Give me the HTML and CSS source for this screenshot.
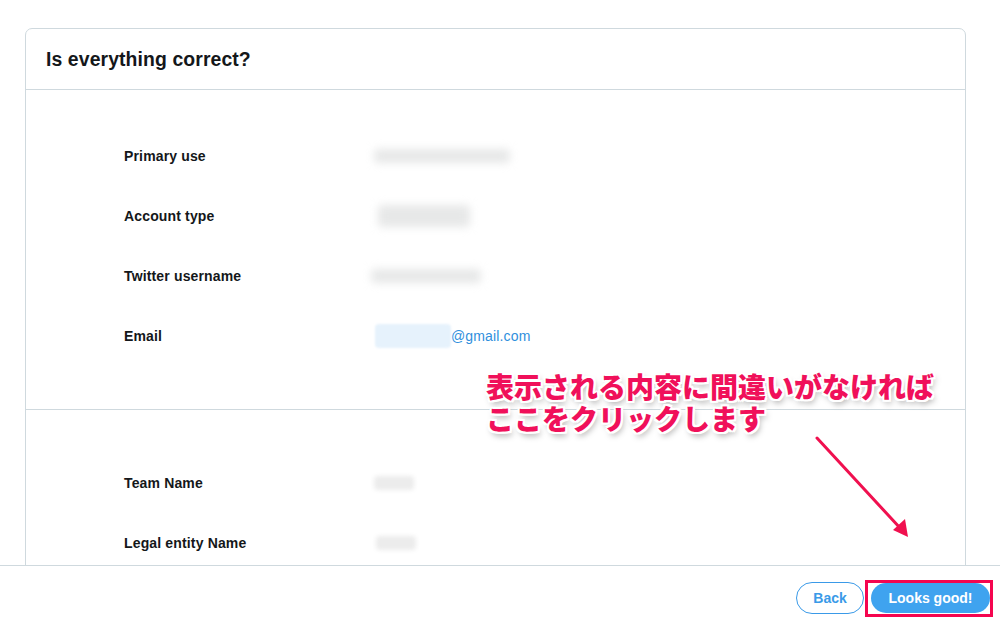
FILE: index.html
```html
<!DOCTYPE html>
<html lang="en">
<head>
<meta charset="utf-8">
<link rel="stylesheet" href="styles.css">
</head>
<body>
<div class="page">
  <main class="viewport">
    <section class="card">
      <header class="card-head"><h1>Is everything correct?</h1></header>
      <div class="section s1">
        <div class="row"><span class="label">Primary use</span><span class="blur b1"></span></div>
        <div class="row"><span class="label">Account type</span><span class="blur b2"></span></div>
        <div class="row"><span class="label">Twitter username</span><span class="blur b3"></span></div>
        <div class="row"><span class="label">Email</span><span class="email"><span class="blur b4"></span>@gmail.com</span></div>
      </div>
      <div class="section s2">
        <div class="row"><span class="label">Team Name</span><span class="blur b5"></span></div>
        <div class="row"><span class="label">Legal entity Name</span><span class="blur b6"></span></div>
        <div class="row"><span class="label"></span></div>
      </div>
    </section>
    <div class="note">
      <div class="note-line">表示される内容に間違いがなければ</div>
      <div class="note-line">ここをクリックします</div>
    </div>
    <svg class="arrow" width="110" height="110" viewBox="0 0 110 110">
      <line x1="4" y1="3" x2="88" y2="94" stroke="#f0104f" stroke-width="3" stroke-linecap="round"/>
      <polygon points="95,102 80,95 92,84" fill="#f0104f"/>
    </svg>
  </main>
  <footer class="foot">
    <button class="btn back">Back</button>
    <span class="hl"><button class="btn ok">Looks good!</button></span>
  </footer>
</div>
</body>
</html>
```
FILE: styles.css
```css
html, body { margin: 0; padding: 0; background: #fff; }
body { font-family: "Liberation Sans", Arial, sans-serif; color: #14171a; }
.page { width: 1000px; height: 629px; display: flex; flex-direction: column; overflow: hidden; }
.viewport { position: relative; height: 565px; overflow: hidden; padding: 28px 34px 0 25px; box-sizing: border-box; }
.card { border: 1px solid #cfd9de; border-radius: 7px; height: 700px; box-sizing: border-box; }
.card-head { height: 61px; border-bottom: 1px solid #cfd9de; display: flex; align-items: center; padding-left: 20px; box-sizing: border-box; }
.card-head h1 { margin: 0; font-size: 19.4px; font-weight: 700; letter-spacing: 0.1px; }
.section { padding-left: 98px; }
.s1 { padding-top: 36px; padding-bottom: 43px; border-bottom: 1px solid #cfd9de; }
.s2 { padding-top: 43px; }
.row { height: 60px; display: grid; grid-template-columns: 248px 1fr; align-items: center; }
.label { font-size: 14px; font-weight: 700; letter-spacing: 0.15px; }
.blur { display: block; background: #e7e8e8; filter: blur(4px); border-radius: 4px; }
.b1 { width: 136px; height: 14px; margin-left: 2px; }
.b2 { width: 92px; height: 22px; margin-left: 6px; }
.b3 { width: 110px; height: 14px; margin-left: -1px; }
.b4 { display: inline-block; width: 76px; height: 24px; background: #e6f2fc; vertical-align: middle; margin-left: 3px; filter: blur(1px); }
.b5 { width: 40px; height: 14px; margin-left: 2px; background: #ececec; filter: blur(2px); }
.b6 { width: 40px; height: 14px; margin-left: 4px; background: #ececec; filter: blur(2px); }
.email { font-size: 14px; color: #2f8fdd; display: flex; align-items: center; letter-spacing: 0.15px; }
.note { position: absolute; left: 486px; top: 370px; font-family: "Noto Sans CJK JP", sans-serif; font-weight: 900; font-size: 28px; color: #f0105a;
  text-shadow: -2px -2px 0 #fff, 2px -2px 0 #fff, -2px 2px 0 #fff, 2px 2px 0 #fff, 0 -2px 0 #fff, 0 2px 0 #fff, -2px 0 0 #fff, 2px 0 0 #fff, 2px 4px 6px rgba(0,0,0,0.35); }
.note-line { line-height: 32px; height: 32px; white-space: nowrap; }
.arrow { position: absolute; left: 813px; top: 435px; }
.foot { height: 64px; border-top: 1px solid #cfd9de; box-sizing: border-box; display: flex; justify-content: flex-end; align-items: center; padding-right: 7px; gap: 1px; }
.btn { font-family: "Liberation Sans", Arial, sans-serif; font-size: 14px; font-weight: 700; border-radius: 16px; cursor: pointer; padding: 0; }
.back { width: 68px; height: 32px; background: #fff; color: #3a9ae8; border: 1px solid #3a9ae8; }
.hl { display: flex; border: 3px solid #f5054f; padding: 0 0 1px 3px; margin-top: 2px; }
.ok { width: 119px; height: 30px; background: #3fa3ef; color: #fff; border: none; }
```
